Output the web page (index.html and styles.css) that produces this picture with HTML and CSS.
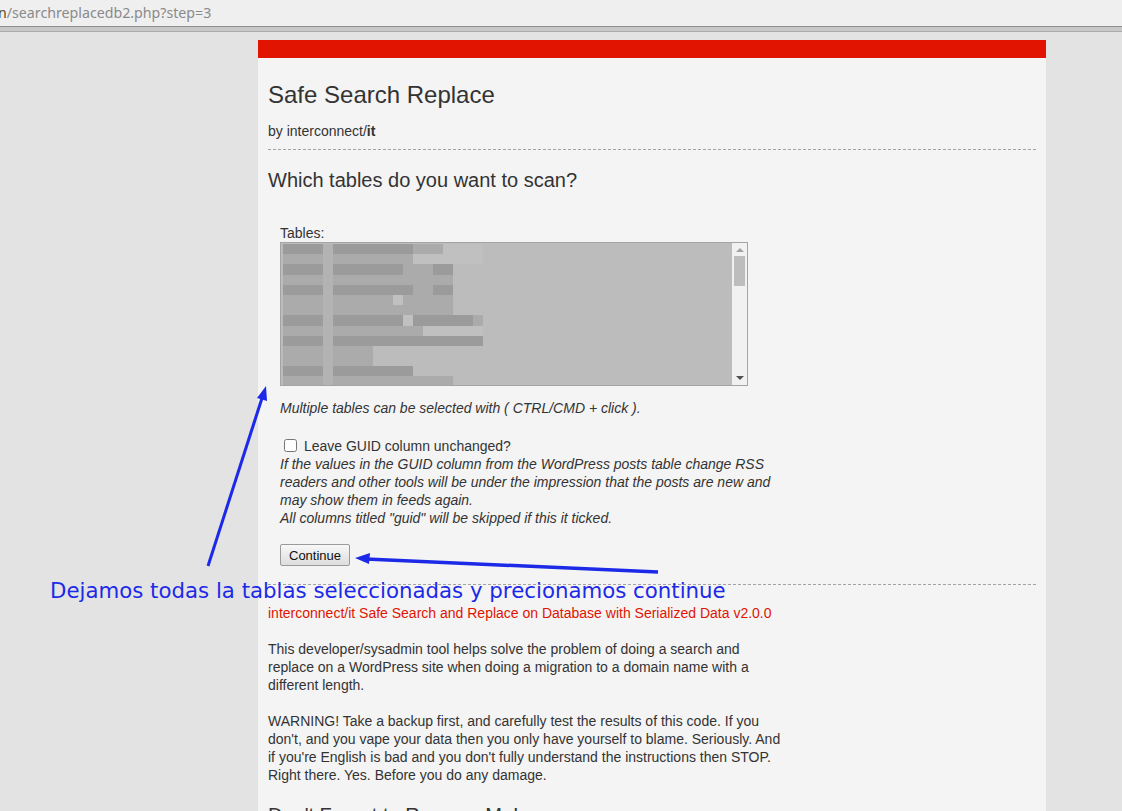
FILE: index.html
```html
<!DOCTYPE html>
<html lang="en">
<head>
    <meta charset="UTF-8">
    <title>Safe Search Replace</title>
    <link rel="stylesheet" href="styles.css">
</head>
<body>
    <div class="addressbar">
        <span class="host">n</span>/searchreplacedb2.php?step=3
    </div>
    <div class="tabline"></div>

    <div class="page">
        <div class="container">
            <div class="redbar"></div>
            <h1>Safe Search Replace</h1>
            <p class="byline">by interconnect/<strong>it</strong></p>
            <hr>
            <h2>Which tables do you want to scan?</h2>

            <form class="tables-form">
                <label class="field-label">Tables:</label>
                <div class="tablelist">
                    <div class="rows">
                        <div class="row"><i class="k w4"></i><i class="s w1"></i><i class="k w8"></i><i class="g w3"></i><i class="l w4"></i></div>
                        <div class="row"><i class="g w4"></i><i class="s w1"></i><i class="g w8"></i><i class="l w7"></i></div>
                        <div class="row"><i class="k w4"></i><i class="s w1"></i><i class="k w7"></i><i class="g w3"></i><i class="k w2"></i></div>
                        <div class="row"><i class="g w4"></i><i class="s w1"></i><i class="g w12"></i></div>
                        <div class="row"><i class="k w4"></i><i class="s w1"></i><i class="k w8"></i><i class="g w2"></i><i class="k w2"></i></div>
                        <div class="row"><i class="g w4"></i><i class="s w1"></i><i class="g w6"></i><i class="l w1"></i><i class="g w5"></i></div>
                        <div class="row"><i class="g w4"></i><i class="s w1"></i><i class="g w12"></i></div>
                        <div class="row"><i class="k w4"></i><i class="s w1"></i><i class="k w7"></i><i class="l w1"></i><i class="k w6"></i><i class="g w1"></i></div>
                        <div class="row"><i class="g w4"></i><i class="s w1"></i><i class="g w9"></i><i class="l w6"></i></div>
                        <div class="row"><i class="k w4"></i><i class="s w1"></i><i class="k w15"></i></div>
                        <div class="row"><i class="g w4"></i><i class="s w1"></i><i class="g w4"></i></div>
                        <div class="row"><i class="g w4"></i><i class="s w1"></i><i class="g w4"></i></div>
                        <div class="row"><i class="k w4"></i><i class="s w1"></i><i class="k w8"></i></div>
                        <div class="row"><i class="g w4"></i><i class="s w1"></i><i class="g w12"></i></div>
                    </div>
                    <div class="scrollbar">
                        <span class="arrow up"></span>
                        <span class="thumb"></span>
                        <span class="arrow down"></span>
                    </div>
                </div>
                <p class="note">Multiple tables can be selected with ( CTRL/CMD + click ).</p>

                <label class="check">
                    <input type="checkbox"> Leave GUID column unchanged?
                </label>
                <p class="note guid">If the values in the GUID column from the WordPress posts table change RSS readers and other tools will be under the impression that the posts are new and may show them in feeds again.<br>All columns titled "guid" will be skipped if this it ticked.</p>

                <button type="button" class="continue">Continue</button>
            </form>

            <hr>
            <p class="version">interconnect/it Safe Search and Replace on Database with Serialized Data v2.0.0</p>
            <p class="text">This developer/sysadmin tool helps solve the problem of doing a search and replace on a WordPress site when doing a migration to a domain name with a different length.</p>
            <p class="text">WARNING! Take a backup first, and carefully test the results of this code. If you don't, and you vape your data then you only have yourself to blame. Seriously. And if you're English is bad and you don't fully understand the instructions then STOP. Right there. Yes. Before you do any damage.</p>
            <h2 class="remove">Don't Forget to Remove Me!</h2>
        </div>

        <!-- notas sobre la captura -->
        <svg class="arrows" width="1122" height="811" viewBox="0 0 1122 811">
            <line x1="208" y1="566" x2="263" y2="395" stroke="#1c2ae8" stroke-width="3"/>
            <polygon points="266,386 257,398 267,401" fill="#1c2ae8"/>
            <line x1="658" y1="572" x2="366" y2="559" stroke="#1c2ae8" stroke-width="3.5"/>
            <polygon points="355,558 370,553 369,564" fill="#1c2ae8"/>
        </svg>
        <div class="caption">Dejamos todas la tablas seleccionadas y precionamos continue</div>
    </div>
</body>
</html>
```

FILE: styles.css
```css
body {
    margin: 0;
    font-family: "Liberation Sans", Arial, sans-serif;
    background-color: #e3e3e3;
    height: 811px;
    overflow: hidden;
}
.addressbar {
    height: 27px;
    box-sizing: border-box;
    padding-top: 3px;
    background-color: #efefef;
    border-bottom: 1px solid #8e8e8e;
    font-family: "Noto Sans", "Open Sans", sans-serif;
    font-size: 14.2px;
    color: #8a8a8a;
    white-space: nowrap;
}
.host {
    color: #5a4a2a;
    margin-left: -2px;
}
.tabline {
    height: 4px;
    background-color: #c8c8c8;
    border-bottom: 1px solid #a9a9a9;
}
.page {
    position: relative;
    padding: 8px 0 0 258px;
}
.container {
    width: 768px;
    padding: 0 10px;
    background-color: #f4f4f4;
    color: #333;
    font-size: 14px;
    line-height: 18px;
    height: 800px;
}
.redbar {
    height: 18px;
    margin: 0 -10px;
    background-color: #e01400;
}
h1 {
    font-size: 24px;
    line-height: 28px;
    font-weight: normal;
    margin: 23px 0 0;
}
.byline {
    margin: 13px 0 0;
}
hr {
    border: none;
    border-top: 1px dashed #a3a3a3;
    margin: 9px 0 0;
    height: 0;
}
h2 {
    font-size: 20px;
    line-height: 24px;
    font-weight: normal;
    margin: 18px 0 0;
}
.tables-form {
    padding: 32px 12px 0;
    width: 508px;
}
.field-label {
    display: block;
}
.tablelist {
    display: flex;
    width: 468px;
    height: 144px;
    box-sizing: border-box;
    border: 1px solid #a4a4a4;
    background-color: #bcbcbc;
}
.rows {
    flex: 1;
    padding: 1px 0 0 2px;
    overflow: hidden;
}
.row {
    display: flex;
    height: 10.2px;
}
.row i {
    display: block;
    height: 100%;
}
.k { background-color: #9b9b9b; }
.g { background-color: #ababab; }
.s { background-color: #b3b3b3; }
.l { background-color: #c0c0c0; }
.w1 { width: 10px; }
.w2 { width: 20px; }
.w3 { width: 30px; }
.w4 { width: 40px; }
.w5 { width: 50px; }
.w6 { width: 60px; }
.w7 { width: 70px; }
.w8 { width: 80px; }
.w9 { width: 90px; }
.w12 { width: 120px; }
.w15 { width: 150px; }
.scrollbar {
    width: 15px;
    background-color: #f1f1f1;
    display: flex;
    flex-direction: column;
    align-items: center;
    position: relative;
}
.arrow {
    width: 0;
    height: 0;
    border-left: 4px solid transparent;
    border-right: 4px solid transparent;
}
.arrow.up {
    margin-top: 5px;
    border-bottom: 4px solid #a3a3a3;
}
.arrow.down {
    margin-top: auto;
    margin-bottom: 5px;
    border-top: 4px solid #505050;
}
.thumb {
    width: 11px;
    height: 30px;
    margin-top: 4px;
    background-color: #bdbdbd;
}
.note {
    font-style: italic;
    margin: 13px 0 0;
}
.check {
    display: block;
    margin-top: 20px;
}
.check input {
    margin: 0 3px 0 4px;
    width: 13px;
    height: 13px;
    vertical-align: -1px;
}
.note.guid {
    margin-top: 0;
}
.continue {
    display: block;
    margin-top: 17px;
    height: 22px;
    padding: 0 8px;
    font-family: "Liberation Sans", Arial, sans-serif;
    font-size: 13px;
    color: #111;
    background: linear-gradient(#f8f8f8, #dddddd);
    border: 1px solid #9a9a9a;
    border-radius: 2px;
}
.tables-form + hr {
    margin-top: 18px;
}
.version {
    color: #e01400;
    margin: 19px 0 0;
}
.text {
    width: 520px;
    margin: 18px 0 0;
}
.remove {
    margin-top: 19px;
}
.arrows {
    position: absolute;
    left: 0;
    top: -32px;
}
.caption {
    position: absolute;
    left: 50px;
    top: 546px;
    font-family: "DejaVu Sans", sans-serif;
    font-size: 21.3px;
    color: #1c2ae8;
    white-space: nowrap;
}
```
